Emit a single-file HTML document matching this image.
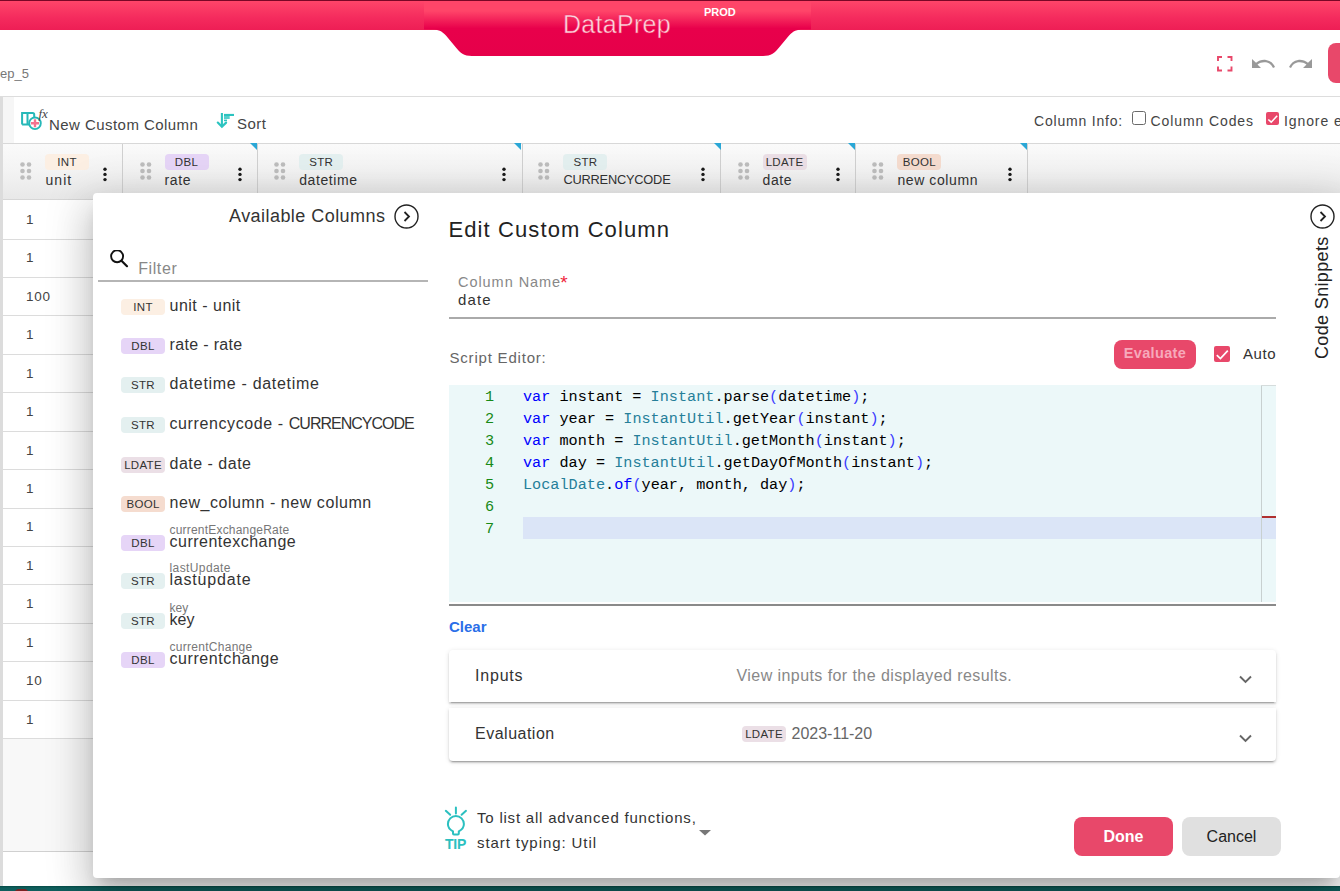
<!DOCTYPE html>
<html><head><meta charset="utf-8">
<style>
*{box-sizing:border-box;margin:0;padding:0}
html,body{width:1340px;height:891px;overflow:hidden;background:#fff;font-family:"Liberation Sans",sans-serif;color:#333;position:relative}
.a{position:absolute;white-space:nowrap}
.topbar{left:0;top:0;width:1340px;height:30px;background:linear-gradient(#ff4569 0%,#f42a5d 60%,#ee1e55 100%);border-top:1px solid #7a0626}
.badge{position:absolute;height:16px;border-radius:4px;font-size:11.5px;line-height:16px;text-align:center;color:#333;letter-spacing:0.3px}
.b-int{background:#fcefe3}
.b-dbl{background:#e6d5f7}
.b-str{background:#e4f0f0}
.b-ldate{background:#ebdfe6}
.b-bool{background:#f5dccf}
.hdr{top:144px;height:55px;background:linear-gradient(#fafafa,#f3f3f3 50%,#e8e8e8);border-right:1px solid #d0d0d0}
.row{left:3px;width:1340px;height:1px;background:#dcdcdc}
.cellnum{font-size:13.5px;letter-spacing:0.7px;color:#444}
.hlab{font-size:14px;letter-spacing:0.6px;color:#333}
.dlg{background:#fff;border-radius:4px 0 4px 4px;box-shadow:0 11px 15px -7px rgba(0,0,0,.2),0 24px 38px 3px rgba(0,0,0,.14),0 9px 46px 8px rgba(0,0,0,.12)}
.item{font-size:16px;color:#333}
.sub{font-size:12px;color:#777}
.code{font-family:"Liberation Mono",monospace;font-size:15.2px;line-height:22px;color:#000}
.ln{color:#178a17}
.k{color:#0000ff}.t{color:#267f99}.p{color:#3b3bff}
.panel{background:#fff;box-shadow:0 3px 1px -2px rgba(0,0,0,.2),0 2px 2px 0 rgba(0,0,0,.14),0 1px 5px 0 rgba(0,0,0,.12)}
</style></head><body>

<!-- top bar -->
<div class="a topbar"></div>
<svg class="a" style="left:424px;top:0" width="387" height="57" viewBox="0 0 388 57" preserveAspectRatio="none">
  <defs><linearGradient id="tg" x1="0" y1="0" x2="0" y2="1">
    <stop offset="0" stop-color="#ff4569"/><stop offset="0.18" stop-color="#ff4569"/><stop offset="0.5" stop-color="#e8004b"/><stop offset="1" stop-color="#e6004a"/></linearGradient></defs>
  <path d="M0 1 H388 V29.5 H380.0 C374.0 29.5 370.0 31.0 366.0 35.5 L356.0 47.5 C352.0 52.5 348.0 56.0 340.0 56.0 H48 C40 56 36 52.5 32 47.5 L22 35.5 C18 31 14 29.5 8 29.5 H0 Z" fill="url(#tg)"/>
</svg>
<div class="a" style="left:563px;top:9.5px;font-size:25px;color:#fcd6e0;letter-spacing:0.3px;-webkit-text-stroke:0.5px #ee2a5c">DataPrep</div>
<div class="a" style="left:704px;top:6px;font-size:11px;font-weight:bold;color:#fff">PROD</div>

<!-- subheader -->
<div class="a" style="left:0;top:66px;font-size:13px;color:#777">ep_5</div>
<div class="a" style="left:0;top:96px;width:1340px;height:1px;background:#ddd"></div>


<!-- subheader icons -->
<svg class="a" style="left:1216.5px;top:56.2px" width="16" height="16" viewBox="0 0 16 16" fill="none" stroke="#e8486a" stroke-width="1.9">
  <path d="M1 5V1H5M10.5 1H14.5V5M14.5 10.5V14.5H10.5M5 14.5H1V10.5"/>
</svg>
<svg class="a" style="left:1251px;top:55px" width="24" height="16" viewBox="0 0 24 16">
  <path d="M1 4 L1 13 L10 13 L6.5 9.5 C9 7.5 12 6.8 15 7.3 C18 7.8 20.5 9.8 22 13 L24 12 C22.3 8.2 19 5.5 15 4.9 C11.5 4.4 8 5.3 5 7.7 Z" fill="#999"/>
</svg>
<svg class="a" style="left:1289px;top:55px" width="24" height="16" viewBox="0 0 24 16">
  <g transform="translate(24,0) scale(-1,1)"><path d="M1 4 L1 13 L10 13 L6.5 9.5 C9 7.5 12 6.8 15 7.3 C18 7.8 20.5 9.8 22 13 L24 12 C22.3 8.2 19 5.5 15 4.9 C11.5 4.4 8 5.3 5 7.7 Z" fill="#999"/></g>
</svg>
<div class="a" style="left:1328px;top:43px;width:40px;height:40px;border-radius:8px;background:#e8486a"></div>

<!-- left strip -->
<div class="a" style="left:0;top:97px;width:3px;height:789px;background:#dcdcdc"></div>
<div class="a" style="left:3px;top:97px;width:11px;height:46px;background:#f6f6f6"></div>

<!-- toolbar -->
<svg class="a" style="left:15px;top:105px" width="40" height="30" viewBox="0 0 40 30">
  <path d="M7.1 19.5 V7.9 H17.7 Q19.2 7.9 19.2 9.4 V13" fill="none" stroke="#26b8b8" stroke-width="2"/>
  <path d="M7.1 19.5 H14 M12.5 8 V19.5" fill="none" stroke="#26b8b8" stroke-width="2"/>
  <circle cx="20" cy="18.3" r="5.8" fill="#fff" stroke="#26b8b8" stroke-width="1.9"/>
  <path d="M20 14.3V22.3M16 18.3H24" stroke="#f4728f" stroke-width="2.4"/>
  <text x="23.5" y="13.2" font-family="Liberation Serif" font-style="italic" font-size="13" fill="#444">fx</text>
</svg>
<div class="a" style="left:49px;top:116px;font-size:15px;letter-spacing:0.45px;color:#444">New Custom Column</div>
<svg class="a" style="left:210px;top:108px" width="28" height="24" viewBox="0 0 28 24">
  <path d="M11.9 5 V18" stroke="#2cc4c0" stroke-width="2.1" fill="none"/>
  <path d="M7.8 14.6 L11.9 18.8 L16.1 14.6" stroke="#2cc4c0" stroke-width="2.2" fill="none" stroke-linecap="round"/>
  <rect x="14" y="5.9" width="10" height="2.1" fill="#2cc4c0"/>
  <rect x="14" y="8" width="5.7" height="3" fill="#2cc4c0" opacity=".8"/>
  <rect x="14" y="11.6" width="3" height="1.6" fill="#2cc4c0"/>
</svg>
<div class="a" style="left:237px;top:114.5px;font-size:15px;letter-spacing:0.5px;color:#444">Sort</div>

<div class="a" style="left:1034px;top:113px;font-size:14px;letter-spacing:0.8px;color:#444">Column Info:</div>
<div class="a" style="left:1132px;top:111px;width:14px;height:14px;border:1px solid #6a6a6a;border-radius:2.5px;background:#fff"></div>
<div class="a" style="left:1150.5px;top:113px;font-size:14px;letter-spacing:0.9px;color:#444">Column Codes</div>
<div class="a" style="left:1266px;top:111.5px;width:13px;height:13px;border-radius:2px;background:#e8486a"></div>
<svg class="a" style="left:1266px;top:111.5px" width="13" height="13" viewBox="0 0 13 13"><path d="M2.3 7.5 L5.2 10.2 L11.2 3.7" fill="none" stroke="#fff" stroke-width="1.6"/></svg>
<div class="a" style="left:1284px;top:113px;font-size:14px;letter-spacing:0.9px;color:#444">Ignore errors</div>

<!-- header row -->
<div class="a" style="left:3px;top:143px;width:1337px;height:1.2px;background:#d8d8d8"></div>
<div class="a hdr" style="left:3px;width:120px"></div>
<div class="a hdr" style="left:123px;width:135px"></div>
<div class="a hdr" style="left:258px;width:265px"></div>
<div class="a hdr" style="left:523px;width:198px"></div>
<div class="a hdr" style="left:721px;width:135px"></div>
<div class="a hdr" style="left:856px;width:172px"></div>
<div class="a" style="left:1028px;top:144px;width:312px;height:55px;background:linear-gradient(#fafafa,#f3f3f3 50%,#e8e8e8)"></div>

<svg class="a" style="left:20.0px;top:162px" width="12" height="18" viewBox="0 0 12 18" fill="#bdbdbd"><circle cx="2.5" cy="2.5" r="2.3"/><circle cx="9" cy="2.5" r="2.3"/><circle cx="2.5" cy="9" r="2.3"/><circle cx="9" cy="9" r="2.3"/><circle cx="2.5" cy="15.5" r="2.3"/><circle cx="9" cy="15.5" r="2.3"/></svg>
<div class="badge b-int" style="left:45.0px;top:154px;width:44px">INT</div>
<div class="a hlab" style="left:45.4px;top:171.7px;letter-spacing:1.1px">unit</div>
<svg class="a" style="left:103.4px;top:166.5px" width="4" height="16" viewBox="0 0 4 16" fill="#1a1a1a"><circle cx="2" cy="2.2" r="1.7"/><circle cx="2" cy="7.4" r="1.7"/><circle cx="2" cy="12.6" r="1.7"/></svg>
<svg class="a" style="left:139.5px;top:162px" width="12" height="18" viewBox="0 0 12 18" fill="#bdbdbd"><circle cx="2.5" cy="2.5" r="2.3"/><circle cx="9" cy="2.5" r="2.3"/><circle cx="2.5" cy="9" r="2.3"/><circle cx="9" cy="9" r="2.3"/><circle cx="2.5" cy="15.5" r="2.3"/><circle cx="9" cy="15.5" r="2.3"/></svg>
<div class="badge b-dbl" style="left:164.5px;top:154px;width:44px">DBL</div>
<div class="a hlab" style="left:164.5px;top:171.7px">rate</div>
<svg class="a" style="left:238.1px;top:166.5px" width="4" height="16" viewBox="0 0 4 16" fill="#1a1a1a"><circle cx="2" cy="2.2" r="1.7"/><circle cx="2" cy="7.4" r="1.7"/><circle cx="2" cy="12.6" r="1.7"/></svg>
<svg class="a" style="left:250.2px;top:143px" width="7" height="7" viewBox="0 0 7 7"><path d="M0 0H7V7Z" fill="#2aa7d6"/></svg>
<svg class="a" style="left:274.2px;top:162px" width="12" height="18" viewBox="0 0 12 18" fill="#bdbdbd"><circle cx="2.5" cy="2.5" r="2.3"/><circle cx="9" cy="2.5" r="2.3"/><circle cx="2.5" cy="9" r="2.3"/><circle cx="9" cy="9" r="2.3"/><circle cx="2.5" cy="15.5" r="2.3"/><circle cx="9" cy="15.5" r="2.3"/></svg>
<div class="badge b-str" style="left:299.2px;top:154px;width:44px">STR</div>
<div class="a hlab" style="left:299.2px;top:171.7px">datetime</div>
<svg class="a" style="left:502.3px;top:166.5px" width="4" height="16" viewBox="0 0 4 16" fill="#1a1a1a"><circle cx="2" cy="2.2" r="1.7"/><circle cx="2" cy="7.4" r="1.7"/><circle cx="2" cy="12.6" r="1.7"/></svg>
<svg class="a" style="left:514.4px;top:143px" width="7" height="7" viewBox="0 0 7 7"><path d="M0 0H7V7Z" fill="#2aa7d6"/></svg>
<svg class="a" style="left:538.4px;top:162px" width="12" height="18" viewBox="0 0 12 18" fill="#bdbdbd"><circle cx="2.5" cy="2.5" r="2.3"/><circle cx="9" cy="2.5" r="2.3"/><circle cx="2.5" cy="9" r="2.3"/><circle cx="9" cy="9" r="2.3"/><circle cx="2.5" cy="15.5" r="2.3"/><circle cx="9" cy="15.5" r="2.3"/></svg>
<div class="badge b-str" style="left:563.4px;top:154px;width:44px">STR</div>
<div class="a hlab" style="left:563.4px;top:171.7px;letter-spacing:-0.2px;font-size:12.8px">CURRENCYCODE</div>
<svg class="a" style="left:701.4px;top:166.5px" width="4" height="16" viewBox="0 0 4 16" fill="#1a1a1a"><circle cx="2" cy="2.2" r="1.7"/><circle cx="2" cy="7.4" r="1.7"/><circle cx="2" cy="12.6" r="1.7"/></svg>
<svg class="a" style="left:713.5px;top:143px" width="7" height="7" viewBox="0 0 7 7"><path d="M0 0H7V7Z" fill="#2aa7d6"/></svg>
<svg class="a" style="left:737.5px;top:162px" width="12" height="18" viewBox="0 0 12 18" fill="#bdbdbd"><circle cx="2.5" cy="2.5" r="2.3"/><circle cx="9" cy="2.5" r="2.3"/><circle cx="2.5" cy="9" r="2.3"/><circle cx="9" cy="9" r="2.3"/><circle cx="2.5" cy="15.5" r="2.3"/><circle cx="9" cy="15.5" r="2.3"/></svg>
<div class="badge b-ldate" style="left:762.5px;top:154px;width:44px">LDATE</div>
<div class="a hlab" style="left:762.5px;top:171.7px">date</div>
<svg class="a" style="left:836.3px;top:166.5px" width="4" height="16" viewBox="0 0 4 16" fill="#1a1a1a"><circle cx="2" cy="2.2" r="1.7"/><circle cx="2" cy="7.4" r="1.7"/><circle cx="2" cy="12.6" r="1.7"/></svg>
<svg class="a" style="left:848.4px;top:143px" width="7" height="7" viewBox="0 0 7 7"><path d="M0 0H7V7Z" fill="#2aa7d6"/></svg>
<svg class="a" style="left:872.4px;top:162px" width="12" height="18" viewBox="0 0 12 18" fill="#bdbdbd"><circle cx="2.5" cy="2.5" r="2.3"/><circle cx="9" cy="2.5" r="2.3"/><circle cx="2.5" cy="9" r="2.3"/><circle cx="9" cy="9" r="2.3"/><circle cx="2.5" cy="15.5" r="2.3"/><circle cx="9" cy="15.5" r="2.3"/></svg>
<div class="badge b-bool" style="left:897.4px;top:154px;width:44px">BOOL</div>
<div class="a hlab" style="left:897.4px;top:171.7px">new column</div>
<svg class="a" style="left:1008.2px;top:166.5px" width="4" height="16" viewBox="0 0 4 16" fill="#1a1a1a"><circle cx="2" cy="2.2" r="1.7"/><circle cx="2" cy="7.4" r="1.7"/><circle cx="2" cy="12.6" r="1.7"/></svg>
<svg class="a" style="left:1020.3px;top:143px" width="7" height="7" viewBox="0 0 7 7"><path d="M0 0H7V7Z" fill="#2aa7d6"/></svg>
<div class="a" style="left:3px;top:199px;width:1337px;height:1px;background:#d6d6d6"></div>
<div class="a cellnum" style="left:26px;top:212.0px">1</div>
<div class="a row" style="top:238.5px"></div>
<div class="a cellnum" style="left:26px;top:250.4px">1</div>
<div class="a row" style="top:276.9px"></div>
<div class="a cellnum" style="left:26px;top:288.9px">100</div>
<div class="a row" style="top:315.4px"></div>
<div class="a cellnum" style="left:26px;top:327.3px">1</div>
<div class="a row" style="top:353.8px"></div>
<div class="a cellnum" style="left:26px;top:365.7px">1</div>
<div class="a row" style="top:392.2px"></div>
<div class="a cellnum" style="left:26px;top:404.1px">1</div>
<div class="a row" style="top:430.6px"></div>
<div class="a cellnum" style="left:26px;top:442.6px">1</div>
<div class="a row" style="top:469.1px"></div>
<div class="a cellnum" style="left:26px;top:481.0px">1</div>
<div class="a row" style="top:507.5px"></div>
<div class="a cellnum" style="left:26px;top:519.4px">1</div>
<div class="a row" style="top:545.9px"></div>
<div class="a cellnum" style="left:26px;top:557.9px">1</div>
<div class="a row" style="top:584.4px"></div>
<div class="a cellnum" style="left:26px;top:596.3px">1</div>
<div class="a row" style="top:622.8px"></div>
<div class="a cellnum" style="left:26px;top:634.7px">1</div>
<div class="a row" style="top:661.2px"></div>
<div class="a cellnum" style="left:26px;top:673.2px">10</div>
<div class="a row" style="top:699.7px"></div>
<div class="a cellnum" style="left:26px;top:711.6px">1</div>
<div class="a row" style="top:738.1px"></div>
<div class="a" style="left:3px;top:739px;width:1337px;height:112px;background:#f8f8f8"></div>
<div class="a row" style="top:851px;background:#d0d0d0"></div>
<div class="a" style="left:0;top:886px;width:1340px;height:5px;background:linear-gradient(#064a46,#0f5f5d 40%,#0f5d5c)"></div>
<div class="a" style="left:13.5px;top:889px;width:15.5px;height:10px;border-radius:7px;background:#7c2222"></div>
<div class="a dlg" style="left:93px;top:193.2px;width:1247px;height:684.6px"></div>
<div class="a" style="left:229px;top:206px;font-size:18px;letter-spacing:0.45px;color:#333">Available Columns</div>
<svg class="a" style="left:393.5px;top:204px" width="25" height="25" viewBox="0 0 25 25"><circle cx="12.5" cy="12.5" r="11.5" fill="none" stroke="#222" stroke-width="1.4"/><path d="M10.5 8 L15 12.5 L10.5 17" fill="none" stroke="#222" stroke-width="1.8"/></svg>
<svg class="a" style="left:109px;top:250px" width="21" height="19" viewBox="0 0 21 19"><circle cx="8.1" cy="6.3" r="6" fill="none" stroke="#111" stroke-width="1.9"/><path d="M12.5 10.7 L18 16.2" stroke="#111" stroke-width="2.2" stroke-linecap="round"/></svg>
<div class="a" style="left:138.2px;top:259.5px;font-size:16px;letter-spacing:0.6px;color:#888">Filter</div>
<div class="a" style="left:98px;top:280px;width:330px;height:1.7px;background:#b5b5b5"></div>
<div class="badge b-int lb" style="left:121px;top:299.0px;width:44px">INT</div>
<div class="a item" style="left:169.5px;top:297.0px;letter-spacing:0.5px">unit - unit</div>
<div class="badge b-dbl lb" style="left:121px;top:338.0px;width:44px">DBL</div>
<div class="a item" style="left:169.5px;top:336.0px;letter-spacing:0.34px">rate - rate</div>
<div class="badge b-str lb" style="left:121px;top:377.0px;width:44px">STR</div>
<div class="a item" style="left:169.5px;top:375.0px;letter-spacing:0.69px">datetime - datetime</div>
<div class="badge b-str lb" style="left:121px;top:417.0px;width:44px">STR</div>
<div class="a item" style="left:169.5px;top:415.0px;letter-spacing:0.6px">currencycode - <span style="letter-spacing:-1px">CURRENCYCODE</span></div>
<div class="badge b-ldate lb" style="left:121px;top:456.5px;width:44px">LDATE</div>
<div class="a item" style="left:169.5px;top:454.5px;letter-spacing:0.5px">date - date</div>
<div class="badge b-bool lb" style="left:121px;top:496.1px;width:44px">BOOL</div>
<div class="a item" style="left:169.5px;top:494.1px;letter-spacing:0.56px">new_column - new column</div>
<div class="badge b-dbl lb" style="left:121px;top:534.5px;width:44px">DBL</div>
<div class="a item" style="left:169.5px;top:532.5px;letter-spacing:0.5px">currentexchange</div>
<div class="a sub" style="left:169.5px;top:522.6px;letter-spacing:0.2px">currentExchangeRate</div>
<div class="badge b-str lb" style="left:121px;top:573.3px;width:44px">STR</div>
<div class="a item" style="left:169.5px;top:571.3px;letter-spacing:0.8px">lastupdate</div>
<div class="a sub" style="left:169.5px;top:561.2px;letter-spacing:0.4px">lastUpdate</div>
<div class="badge b-str lb" style="left:121px;top:613.0px;width:44px">STR</div>
<div class="a item" style="left:169.5px;top:611.0px;letter-spacing:0.1px">key</div>
<div class="a sub" style="left:169.5px;top:601.1px;letter-spacing:0px">key</div>
<div class="badge b-dbl lb" style="left:121px;top:651.8px;width:44px">DBL</div>
<div class="a item" style="left:169.5px;top:649.8px;letter-spacing:0.58px">currentchange</div>
<div class="a sub" style="left:169.5px;top:639.9px;letter-spacing:0.28px">currentChange</div>
<div class="a" style="left:448.5px;top:217px;font-size:22px;letter-spacing:1.1px;color:#222">Edit Custom Column</div>
<div class="a" style="left:458px;top:273.5px;font-size:14.5px;letter-spacing:0.95px;color:#888">Column Name</div>
<div class="a" style="left:560.3px;top:272px;font-size:19px;color:#f0243c">*</div>
<div class="a" style="left:458px;top:291px;font-size:15px;letter-spacing:1.1px;color:#333">date</div>
<div class="a" style="left:449px;top:317px;width:827px;height:1.5px;background:#aaa"></div>
<div class="a" style="left:449.5px;top:349px;font-size:15px;letter-spacing:0.8px;color:#666">Script Editor:</div>
<div class="a" style="left:1114px;top:339.5px;width:82px;height:29px;border-radius:8px;background:#e8486a;color:#f7a9bb;font-weight:bold;font-size:14.5px;letter-spacing:0.35px;line-height:27.5px;text-align:center">Evaluate</div>
<div class="a" style="left:1214px;top:346px;width:16px;height:16px;border-radius:2px;background:#e8486a"></div>
<svg class="a" style="left:1214px;top:346px" width="16" height="16" viewBox="0 0 16 16"><path d="M2.8 9.2 L6.4 12.6 L13.8 4.6" fill="none" stroke="#fff" stroke-width="1.7"/></svg>
<div class="a" style="left:1243px;top:345px;font-size:15px;letter-spacing:0.6px;color:#333">Auto</div>
<div class="a" style="left:449px;top:385px;width:827px;height:217px;background:#ecf8f9"></div>
<div class="a" style="left:523px;top:517px;width:753px;height:22px;background:#dbe5f7"></div>
<div class="a" style="left:1261px;top:385px;width:1px;height:217px;background:#c8d0d0"></div>
<div class="a" style="left:1261px;top:385px;width:15px;height:1px;background:#d5dcdc"></div>
<div class="a" style="left:1262px;top:516px;width:14px;height:2px;background:#b03030"></div>
<div class="a" style="left:449px;top:604px;width:827px;height:2px;background:#8a8a8a"></div>
<div class="a code ln" style="left:470px;top:386.0px;width:24px;text-align:right">1</div>
<div class="a code" style="left:523px;top:386.0px"><span class="k">var</span> instant = <span class="t">Instant</span>.parse<span class="p">(</span>datetime<span class="p">)</span>;</div>
<div class="a code ln" style="left:470px;top:408.0px;width:24px;text-align:right">2</div>
<div class="a code" style="left:523px;top:408.0px"><span class="k">var</span> year = <span class="t">InstantUtil</span>.getYear<span class="p">(</span>instant<span class="p">)</span>;</div>
<div class="a code ln" style="left:470px;top:430.0px;width:24px;text-align:right">3</div>
<div class="a code" style="left:523px;top:430.0px"><span class="k">var</span> month = <span class="t">InstantUtil</span>.getMonth<span class="p">(</span>instant<span class="p">)</span>;</div>
<div class="a code ln" style="left:470px;top:452.0px;width:24px;text-align:right">4</div>
<div class="a code" style="left:523px;top:452.0px"><span class="k">var</span> day = <span class="t">InstantUtil</span>.getDayOfMonth<span class="p">(</span>instant<span class="p">)</span>;</div>
<div class="a code ln" style="left:470px;top:474.0px;width:24px;text-align:right">5</div>
<div class="a code" style="left:523px;top:474.0px"><span class="t">LocalDate</span>.<span class="k">of</span><span class="p">(</span>year, month, day<span class="p">)</span>;</div>
<div class="a code ln" style="left:470px;top:496.0px;width:24px;text-align:right">6</div>
<div class="a code" style="left:523px;top:496.0px"></div>
<div class="a code ln" style="left:470px;top:518.0px;width:24px;text-align:right">7</div>
<div class="a code" style="left:523px;top:518.0px"></div>
<div class="a" style="left:449px;top:618px;font-size:15px;font-weight:bold;color:#2a6ee8">Clear</div>
<div class="a panel" style="left:449px;top:650px;width:827px;height:52px;border-radius:4px 4px 0 0"></div>
<div class="a" style="left:475px;top:667px;font-size:16px;letter-spacing:0.8px;color:#333">Inputs</div>
<div class="a" style="left:736.5px;top:667px;font-size:16px;letter-spacing:0.43px;color:#888">View inputs for the displayed results.</div>
<div class="a panel" style="left:449px;top:708px;width:827px;height:52.5px;border-radius:0 0 4px 4px"></div>
<div class="a" style="left:475px;top:725px;font-size:16px;letter-spacing:0.5px;color:#333">Evaluation</div>
<div class="badge b-ldate" style="left:742px;top:726px;width:44px">LDATE</div>
<div class="a" style="left:791.5px;top:725px;font-size:16px;color:#666">2023-11-20</div>
<svg class="a" style="left:1239px;top:675px" width="13" height="9" viewBox="0 0 13 9"><path d="M1 1.5 L6.5 7 L12 1.5" fill="none" stroke="#666" stroke-width="1.9"/></svg>
<svg class="a" style="left:1239px;top:734px" width="13" height="9" viewBox="0 0 13 9"><path d="M1 1.5 L6.5 7 L12 1.5" fill="none" stroke="#666" stroke-width="1.9"/></svg>
<svg class="a" style="left:444px;top:806px" width="24" height="30" viewBox="0 0 24 30" fill="none" stroke="#2bc0c0" stroke-width="2"><path d="M11.9 1.4V7.6M1.8 4.8L6.2 8.8M22 4.8L17.6 8.8" stroke-linecap="round"/><path d="M9 27.5 V25.3 C5.5 23.5 3.9 21 3.9 18 A8 8 0 0 1 19.9 18 C19.9 21 18.3 23.5 14.8 25.3 V27.5 Q14.8 28.4 13.9 28.4 H9.9 Q9 28.4 9 27.5 Z" stroke-linejoin="round"/></svg>
<div class="a" style="left:445px;top:835.5px;font-size:14px;letter-spacing:-0.2px;font-weight:bold;color:#2bc0c0">TIP</div>
<div class="a" style="left:477px;top:809px;font-size:15px;letter-spacing:0.79px;color:#333">To list all advanced functions,</div>
<div class="a" style="left:477px;top:834px;font-size:15px;letter-spacing:0.92px;color:#333">start typing: Util</div>
<svg class="a" style="left:699px;top:830px" width="12" height="6" viewBox="0 0 12 6"><path d="M0 0H12L6 5.5Z" fill="#777"/></svg>
<div class="a" style="left:1074px;top:817px;width:99px;height:39px;border-radius:8px;background:#e8486a;color:#fff;font-weight:bold;font-size:16px;line-height:39px;text-align:center">Done</div>
<div class="a" style="left:1182px;top:817px;width:99px;height:39px;border-radius:8px;background:#e0e0e0;color:#222;font-size:16px;line-height:39px;text-align:center">Cancel</div>
<svg class="a" style="left:1309.5px;top:203.8px" width="25" height="25" viewBox="0 0 25 25"><circle cx="12.5" cy="12.5" r="11.5" fill="none" stroke="#222" stroke-width="1.4"/><path d="M10.5 8 L15 12.5 L10.5 17" fill="none" stroke="#222" stroke-width="1.8"/></svg>
<div class="a" style="left:1312px;top:358.5px;font-size:18px;letter-spacing:0.35px;color:#222;transform:rotate(-90deg);transform-origin:0 0">Code Snippets</div>
</body></html>
